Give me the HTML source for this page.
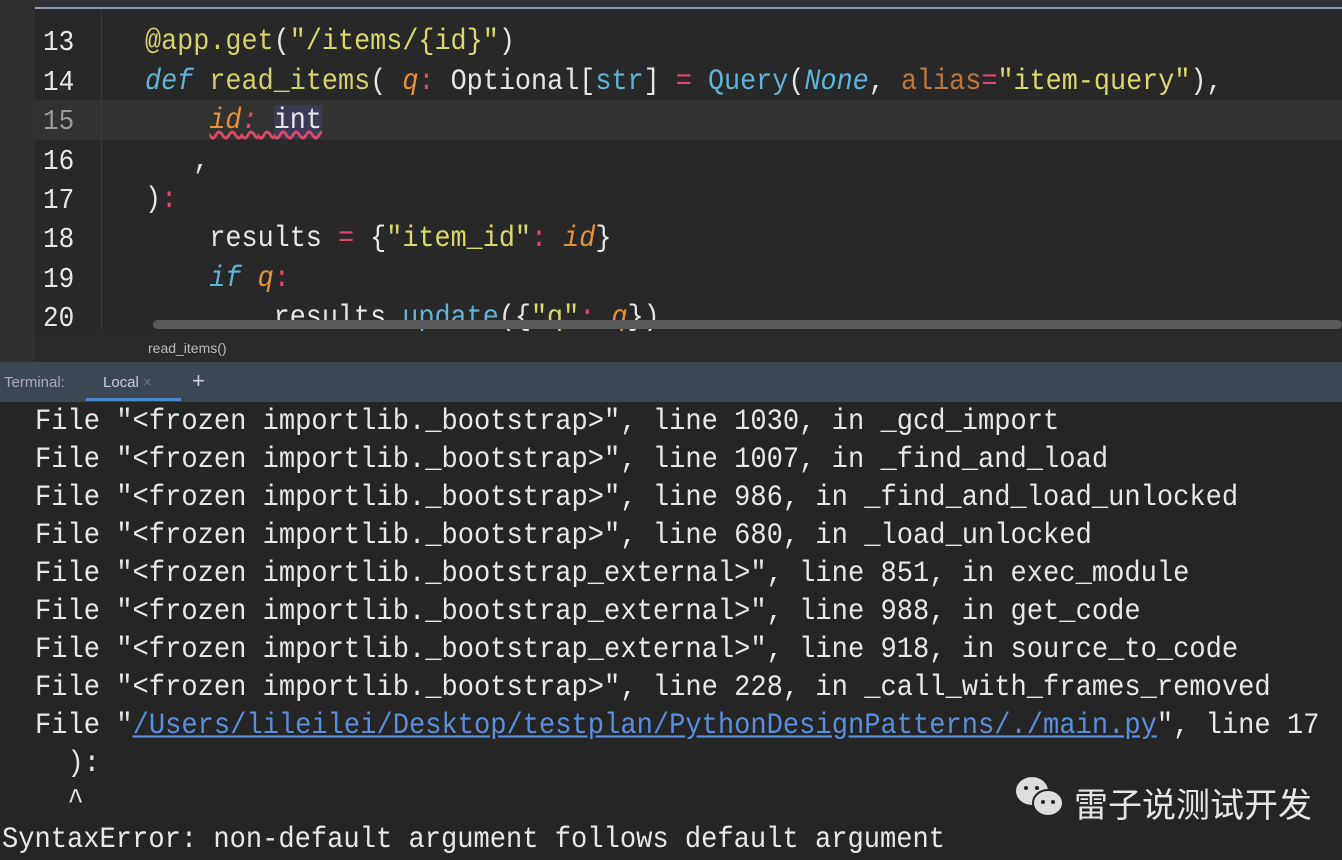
<!DOCTYPE html>
<html><head><meta charset="utf-8"><style>
body{margin:0;width:1342px;height:860px;overflow:hidden;background:#252525;font-family:"Liberation Mono",monospace;}
.ed{position:absolute;left:0;top:0;width:1342px;height:362px;background:#282828;}
.gut{position:absolute;left:0;top:0;width:35px;height:362px;background:#303030;}
.ln{position:absolute;left:43px;font-size:26px;color:#e8e8e8;transform:scaleY(1.1);transform-origin:0 0;}
.c{position:absolute;left:145px;font-size:26.8px;color:#e6e6e6;white-space:pre;transform:scaleY(1.1);transform-origin:0 0;}
.t{position:absolute;left:35px;font-size:27.1px;color:#e8e8e8;white-space:pre;transform:scaleY(1.1);transform-origin:0 0;}
.k{color:#5fb4d8;font-style:italic}.f{color:#d6d16a}.p{color:#e8913a;font-style:italic}.s{color:#dcd86a}.r{color:#e0486a}.b{color:#5fb4d8}.o{color:#c0763a}
</style></head><body>
<div class="ed"></div>
<div style="position:absolute;left:0;top:0;width:1342px;height:7px;background:#2e3238;border-bottom:2px solid #8aa0b8"></div>
<div class="gut"></div>
<div style="position:absolute;left:35px;top:100px;width:1307px;height:40px;background:#323230"></div>
<div style="position:absolute;left:101px;top:10px;width:1px;height:320px;background:#3a3a3a"></div>
<div class="ln" style="top:26px">13</div><div class="ln" style="top:66px">14</div><div class="ln" style="top:105px;color:#9a9a9a">15</div><div class="ln" style="top:145px">16</div><div class="ln" style="top:184px">17</div><div class="ln" style="top:223px">18</div><div class="ln" style="top:263px">19</div><div class="ln" style="top:302px">20</div>
<div class="c" style="top:26px"><span class="f">@app.get</span>(<span class="s">"/items/{id}"</span>)</div>
<div class="c" style="top:66px"><span class="k">def</span> <span class="f">read_items</span>( <span class="p">q</span><span class="r">:</span> Optional[<span class="b">str</span>] <span class="r">=</span> <span class="b">Query</span>(<span class="k">None</span>, <span class="o">alias</span><span class="r">=</span><span class="s">"item-query"</span>),</div>
<div class="c" style="top:105px">    <span class="p" style="text-decoration:underline wavy #e0486a">id<span class="r">:</span> </span><span style="background:#3a3a55;text-decoration:underline wavy #e0486a">int</span></div>
<div class="c" style="top:145px">   ,</div>
<div class="c" style="top:184px">)<span class="r">:</span></div>
<div class="c" style="top:223px">    results <span class="r">=</span> {<span class="s">"item_id"</span><span class="r">:</span> <span class="p">id</span>}</div>
<div class="c" style="top:263px">    <span class="k">if</span> <span class="p">q</span><span class="r">:</span></div>
<div class="c" style="top:302px">        results.<span class="b">update</span>({<span class="s">"q"</span><span class="r">:</span> <span class="p">q</span>})</div>
<div style="position:absolute;left:153px;top:320px;width:1189px;height:9px;border-radius:5px;background:#5a5a5a"></div>
<div style="position:absolute;left:35px;top:331px;width:1307px;height:31px;background:#2a2a2a"></div>
<div style="position:absolute;left:148px;top:340px;font:14px 'Liberation Sans',sans-serif;color:#bbb">read_items()</div>
<div style="position:absolute;left:0;top:362px;width:1342px;height:40px;background:#3c4754"></div>
<div style="position:absolute;left:4px;top:374px;font:15px 'Liberation Sans',sans-serif;color:#aab">Terminal:</div>
<div style="position:absolute;left:103px;top:374px;font:15px 'Liberation Sans',sans-serif;color:#ccd">Local <span style="color:#777">×</span></div>
<div style="position:absolute;left:192px;top:368px;font:22px 'Liberation Sans',sans-serif;color:#ccd">+</div>
<div style="position:absolute;left:86px;top:398px;width:95px;height:3px;background:#4a88c7"></div>
<div class="t" style="top:405px">File "&lt;frozen importlib._bootstrap&gt;", line 1030, in _gcd_import</div>
<div class="t" style="top:443px">File "&lt;frozen importlib._bootstrap&gt;", line 1007, in _find_and_load</div>
<div class="t" style="top:481px">File "&lt;frozen importlib._bootstrap&gt;", line 986, in _find_and_load_unlocked</div>
<div class="t" style="top:519px">File "&lt;frozen importlib._bootstrap&gt;", line 680, in _load_unlocked</div>
<div class="t" style="top:557px">File "&lt;frozen importlib._bootstrap_external&gt;", line 851, in exec_module</div>
<div class="t" style="top:595px">File "&lt;frozen importlib._bootstrap_external&gt;", line 988, in get_code</div>
<div class="t" style="top:633px">File "&lt;frozen importlib._bootstrap_external&gt;", line 918, in source_to_code</div>
<div class="t" style="top:671px">File "&lt;frozen importlib._bootstrap&gt;", line 228, in _call_with_frames_removed</div>
<div class="t" style="top:709px">File "<span style="color:#5a8fe0;text-decoration:underline">/Users/lileilei/Desktop/testplan/PythonDesignPatterns/./main.py</span>", line 17</div>
<div class="t" style="top:747px;left:35px">  ):</div>
<div class="t" style="top:785px;left:35px">  ^</div>
<div class="t" style="top:823px;left:2px">SyntaxError: non-default argument follows default argument</div>
<svg style="position:absolute;left:1014px;top:775px" width="56" height="46"><ellipse cx="18" cy="16" rx="16" ry="14" fill="#ddd"/><ellipse cx="34" cy="28" rx="15" ry="13" fill="#ddd" stroke="#252525" stroke-width="2"/><circle cx="12" cy="13" r="2" fill="#252525"/><circle cx="23" cy="13" r="2" fill="#252525"/><circle cx="29" cy="27" r="2" fill="#252525"/><circle cx="39" cy="27" r="2" fill="#252525"/></svg>
<div style="position:absolute;left:1074px;top:778px;font:34px 'Noto Sans CJK SC',sans-serif;color:#e6e6e6">雷子说测试开发</div>
</body></html>
